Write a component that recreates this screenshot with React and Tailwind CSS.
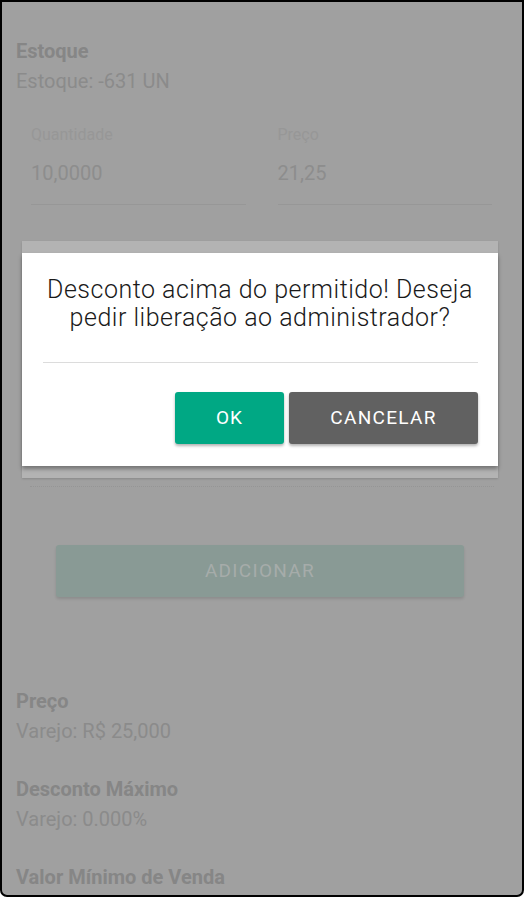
export default function App() {
  const font = { fontFamily: 'Roboto, "Liberation Sans", sans-serif' };

  const sections = [
    ['Preço', 'Varejo: R$ 25,000'],
    ['Desconto Máximo', 'Varejo: 0.000%'],
    ['Valor Mínimo de Venda', null],
  ];

  return (
    <div
      style={font}
      className="relative w-[524px] h-[897px] overflow-hidden border-2 border-black rounded-b-[7px] bg-[#a0a0a0]"
    >
      {/* page content (dimmed by the modal backdrop) */}
      <div className="flex flex-col pt-[34px]">
        <section className="px-[14px]">
          <div className="text-[20px] leading-[30px] font-bold text-[#868686]">Estoque</div>
          <div className="text-[20px] leading-[30px] text-[#8b8b8b]">Estoque: -631 UN</div>
        </section>

        <div className="grid grid-cols-2 gap-[32px] pl-[29px] pr-[30px] mt-[29px]">
          {[
            ['Quantidade', '10,0000'],
            ['Preço', '21,25'],
          ].map(([label, value]) => (
            <div key={label} className="flex flex-col">
              <span className="text-[16px] leading-[20px] text-[#979797]">{label}</span>
              <span className="mt-[16px] text-[20px] leading-[24px] text-[#8d8d8d]">{value}</span>
              <div className="mt-[19px] h-px bg-[#979797]" />
            </div>
          ))}
        </div>

        <div className="mt-[281px] mx-[28px] border-t border-dotted border-[#959595]" />

        <div className="mt-[58px] pl-[54px]">
          <div className="w-[408px] h-[52px] rounded-[3px] bg-[#899a95] shadow-[0_2px_3px_rgba(0,0,0,0.12)] flex items-center justify-center text-[19px] tracking-[1.3px] text-[#a6acaa]">
            ADICIONAR
          </div>
        </div>

        <div className="mt-[89px] flex flex-col gap-[28px] px-[14px]">
          {sections.map(([title, value]) => (
            <section key={title}>
              <div className="text-[20px] leading-[30px] font-bold text-[#868686]">{title}</div>
              {value && <div className="text-[20px] leading-[30px] text-[#8b8b8b]">{value}</div>}
            </section>
          ))}
        </div>
      </div>

      {/* alert dialog */}
      <div className="absolute left-[20px] top-[239px] w-[476px] bg-[#b3b3b3] py-[12px] shadow-[0_1px_2px_rgba(0,0,0,0.15)]">
        <div className="bg-white shadow-[0_3px_4px_rgba(0,0,0,0.35)] pt-[23px] pb-[22px]">
          <p className="text-center text-[25px] leading-[28px] font-light tracking-[0.5px] text-[#1a1a1a] px-[4px]">
            Desconto acima do permitido! Deseja
            <br />
            pedir liberação ao administrador?
          </p>
          <div className="mt-[30px] ml-[21px] mr-[20px] h-px bg-[#dcdcdc]" />
          <div className="mt-[29px] flex justify-end gap-[5px] pr-[20px]">
            <button className="w-[109px] h-[52px] rounded-[3px] bg-[#00a884] text-white text-[19px] tracking-[1px] shadow-[0_2px_3px_rgba(0,0,0,0.3)]">
              OK
            </button>
            <button className="w-[189px] h-[52px] rounded-[3px] bg-[#616161] text-white text-[19px] tracking-[1.3px] shadow-[0_2px_3px_rgba(0,0,0,0.3)]">
              CANCELAR
            </button>
          </div>
        </div>
      </div>
    </div>
  );
}
